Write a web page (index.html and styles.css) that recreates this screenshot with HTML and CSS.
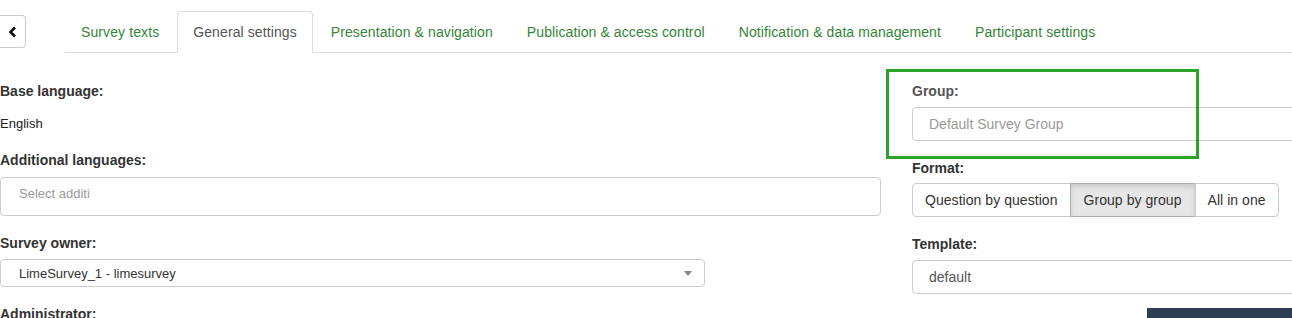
FILE: index.html
```html
<!DOCTYPE html>
<html lang="en">
<head>
	<meta charset="UTF-8">
	<title>General settings</title>
	<link rel="stylesheet" href="styles.css">
</head>
<body>
	<div class="topbar">
		<button class="back" type="button">
			<svg width="9" height="12" viewBox="0 0 9 12"><path d="M7 1.5 L2.5 6 L7 10.5" fill="none" stroke="#111" stroke-width="2.6" stroke-linejoin="miter"/></svg>
		</button>
		<ul class="tabs">
			<li><a href="#">Survey texts</a></li>
			<li class="active"><a href="#">General settings</a></li>
			<li><a href="#">Presentation &amp; navigation</a></li>
			<li><a href="#">Publication &amp; access control</a></li>
			<li><a href="#">Notification &amp; data management</a></li>
			<li><a href="#">Participant settings</a></li>
		</ul>
	</div>

	<div class="content">
		<div class="col left">
			<label class="lbl lbl-base">Base language:</label>
			<p class="value">English</p>
			<label class="lbl lbl-add">Additional languages:</label>
			<div class="multi">Select additi</div>
			<label class="lbl lbl-owner">Survey owner:</label>
			<div class="select">LimeSurvey_1 - limesurvey<span class="caret"></span></div>
			<label class="lbl lbl-admin">Administrator:</label>
		</div>

		<div class="col right">
			<div class="highlight"></div>
			<label class="lbl lbl-group">Group:</label>
			<div class="field muted">Default Survey Group</div>
			<label class="lbl lbl-format">Format:</label>
			<div class="btngroup">
				<span class="btn">Question by question</span><span class="btn on">Group by group</span><span class="btn">All in one</span>
			</div>
			<label class="lbl lbl-template">Template:</label>
			<div class="field">default</div>
			<div class="darkbar"></div>
		</div>
	</div>
</body>
</html>
```

FILE: styles.css
```css
body{
	margin: 0;
	font-family: "Liberation Sans", Arial, sans-serif;
	font-size: 14px;
	color: #333;
	background: #fff;
	overflow: hidden;
	width: 1292px;
	height: 318px;
}
.topbar{
	display: flex;
	align-items: flex-start;
}
.back{
	margin-top: 15px;
	width: 26px;
	height: 33px;
	border: 1px solid #ccc;
	border-left: none;
	border-radius: 0 4px 4px 0;
	background: #fff;
	display: flex;
	align-items: center;
	justify-content: center;
	padding: 0;
}
.tabs{
	list-style: none;
	margin: 11px 0 0 39px;
	padding: 0;
	display: flex;
	flex: 1;
	border-bottom: 1px solid #ddd;
}
.tabs li{
	margin-right: 2px;
	margin-bottom: -1px;
}
.tabs a{
	display: block;
	padding: 10px 15px;
	line-height: 20px;
	border: 1px solid transparent;
	border-radius: 4px 4px 0 0;
	color: #328637;
	text-decoration: none;
	white-space: nowrap;
	letter-spacing: 0.1px;
}
.tabs li.active a{
	color: #555;
	border-color: #ddd;
	border-bottom-color: #fff;
	background: #fff;
}

.content{
	display: grid;
	grid-template-columns: 881px 881px;
	column-gap: 31px;
	padding-top: 28px;
}
.col{
	position: relative;
	display: flex;
	flex-direction: column;
	align-items: flex-start;
}
.lbl{
	display: block;
	font-weight: bold;
	line-height: 20px;
	color: #333;
}
.lbl-add, .lbl-owner, .lbl-admin, .lbl-format, .lbl-template{
	margin-top: 17px;
}
.lbl-add{
	margin-top: 16px;
}
.lbl-group{
	color: #555;
}
.value{
	margin: 13px 0 0;
	line-height: 20px;
	font-size: 13px;
	color: #222;
}
.multi{
	margin-top: 7px;
	width: 100%;
	box-sizing: border-box;
	height: 39px;
	border: 1px solid #ccc;
	border-radius: 4px;
	padding: 6px 18px 0;
	line-height: 20px;
	font-size: 13px;
	color: #999;
}
.select{
	margin-top: 6px;
	width: 705px;
	box-sizing: border-box;
	height: 28px;
	border: 1px solid #ccc;
	border-radius: 4px;
	padding: 0 18px;
	display: flex;
	align-items: center;
	font-size: 13px;
	color: #333;
	position: relative;
}
.caret{
	position: absolute;
	right: 12px;
	top: 11px;
	border-left: 4px solid transparent;
	border-right: 4px solid transparent;
	border-top: 5px solid #888;
}
.field{
	margin-top: 6px;
	width: 100%;
	box-sizing: border-box;
	height: 34px;
	border: 1px solid #ccc;
	border-radius: 4px;
	padding: 0 16px;
	display: flex;
	align-items: center;
	color: #555;
}
.field.muted{
	color: #999;
}
.btngroup{
	margin-top: 5px;
	display: flex;
}
.btn{
	display: block;
	padding: 6px 12px;
	line-height: 20px;
	border: 1px solid #ccc;
	color: #333;
	background: #fff;
	margin-left: -1px;
	letter-spacing: 0.05px;
}
.btn:first-child{
	margin-left: 0;
	border-radius: 4px 0 0 4px;
}
.btn:last-child{
	border-radius: 0 4px 4px 0;
}
.btn.on{
	padding: 6px 13px;
	background: #e6e6e6;
	border-color: #adadad;
	box-shadow: inset 0 3px 5px rgba(0,0,0,.125);
}
.darkbar{
	margin: 14px 0 0 235px;
	width: 400px;
	height: 40px;
	background: #2c3e50;
}
.highlight{
	position: absolute;
	left: -26px;
	top: -12px;
	width: 307px;
	height: 84px;
	border: 3px solid #2ba32b;
}
```
